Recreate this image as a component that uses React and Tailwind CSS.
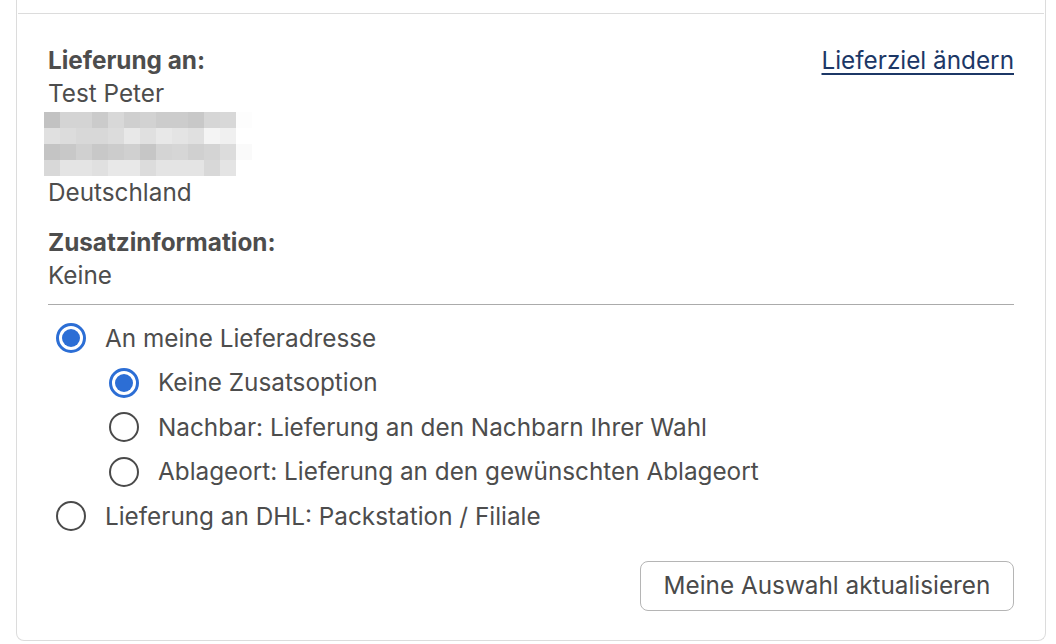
const BLUR = [
  ['#c2c2c2', '#d4d4d4', '#d4d4d4', '#cbcbcb', '#d8d8d8', '#cfcfcf', '#d2d2d2', '#cccccc', '#cccccc', '#c8c8c8', '#d6d6d6', '#d8d8d8', '#fdfdfd'],
  ['#e0e0e0', '#dcdcdc', '#d8d8d8', '#d8d8d8', '#dcdcdc', '#e8e8e8', '#e0e0e0', '#e8e8e8', '#e4e4e4', '#e0e0e0', '#f4f4f4', '#f0f0f0', '#ffffff'],
  ['#c4c4c4', '#c8c8c8', '#d0d0d0', '#c8c8c8', '#cccccc', '#d0d0d0', '#c6c6c6', '#d4d4d4', '#d6d6d6', '#d0d0d0', '#d4d4d4', '#dcdcdc', '#fafafa'],
  ['#d8d8d8', '#e4e4e4', '#e4e4e4', '#e0e0e0', '#e8e8e8', '#e8e8e8', '#dcdcdc', '#e4e4e4', '#e4e4e4', '#e4e4e4', '#d8d8d8', '#e4e4e4', '#ffffff'],
];

function Radio({ checked, label, indent }) {
  return (
    <label className={`flex items-center h-[44.5px] gap-[19px] ${indent ? 'pl-[61px]' : 'pl-[8px]'}`}>
      {checked ? (
        <span className="w-[30px] h-[30px] rounded-full border-[3px] border-[#2c6ed5] flex items-center justify-center shrink-0">
          <span className="w-[18px] h-[18px] rounded-full bg-[#2c6ed5]" />
        </span>
      ) : (
        <span className="w-[30px] h-[30px] rounded-full border-[2.5px] border-[#4a4a4a] shrink-0" />
      )}
      <span>{label}</span>
    </label>
  );
}

export default function App() {
  return (
    <div className="bg-white h-[644px] overflow-hidden font-['Inter',sans-serif] text-[24.3px] leading-[33px] text-[#4d4d4d]">
      <div className="ml-[16px] w-[1030px] h-[641px] border-x border-b border-[#dcdcdc] rounded-b-[8px]">
        <div className="h-[13px]" />
        <div className="mx-[1px] border-t border-[#dcdcdc]" />
        <div className="px-[31px] pt-[30px]">
          {/* Address */}
          <div className="flex justify-between">
            <div>
              <p className="font-bold">Lieferung an:</p>
              <p>Test Peter</p>
              <div className="h-[66px] pt-[2px] -ml-[4px]">
                {BLUR.map((row, i) => (
                  <div key={i} className="flex h-[16px]">
                    {row.map((c, j) => (
                      <div key={j} className="w-[16px] h-[16px]" style={{ background: c }} />
                    ))}
                  </div>
                ))}
              </div>
              <p>Deutschland</p>
            </div>
            <a href="#" className="text-[#1c3766] underline underline-offset-[4px] decoration-[2px]">Lieferziel ändern</a>
          </div>

          <div className="mt-[17px]">
            <p className="font-bold">Zusatzinformation:</p>
            <p>Keine</p>
          </div>

          <div className="mt-[12px] border-t border-[#ababab]" />

          {/* Options */}
          <div className="mt-[11px]">
            <Radio checked label="An meine Lieferadresse" />
            <Radio checked indent label="Keine Zusatsoption" />
            <Radio indent label="Nachbar: Lieferung an den Nachbarn Ihrer Wahl" />
            <Radio indent label="Ablageort: Lieferung an den gewünschten Ablageort" />
            <Radio label="Lieferung an DHL: Packstation / Filiale" />
          </div>

          <div className="flex justify-end mt-[22px]">
            <button className="h-[50px] w-[374px] border border-[#b5b5b5] rounded-[8px] bg-white text-[#4a4a4a]">
              Meine Auswahl aktualisieren
            </button>
          </div>
        </div>
      </div>
    </div>
  );
}
